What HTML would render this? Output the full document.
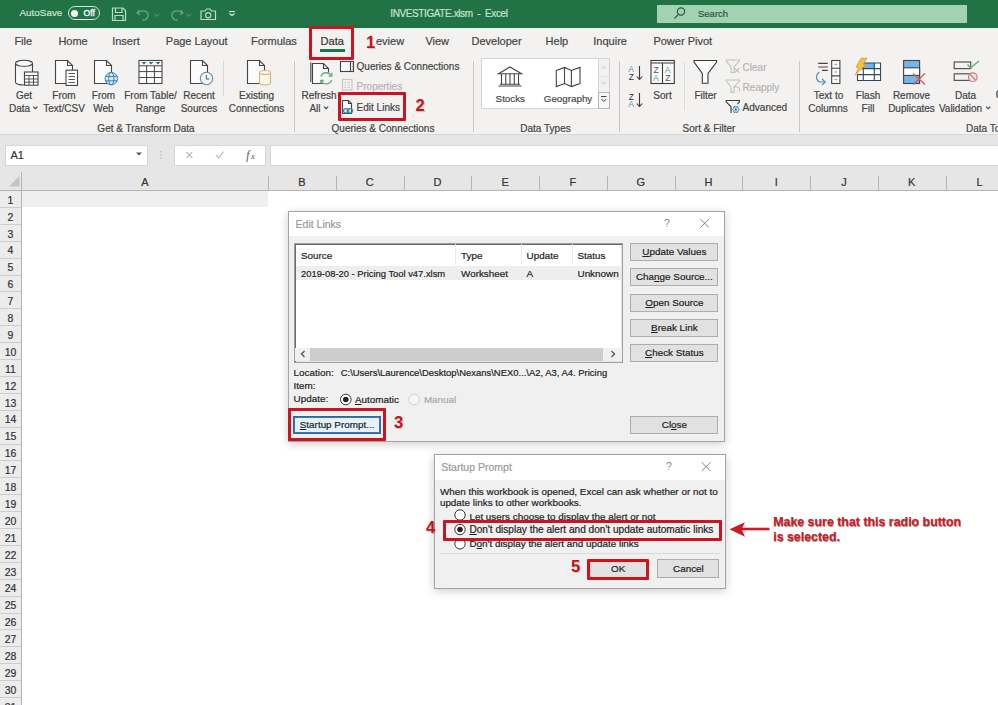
<!DOCTYPE html>
<html><head><meta charset="utf-8"><style>
*{margin:0;padding:0;box-sizing:border-box}
html,body{width:998px;height:705px;overflow:hidden;background:#fff;font-family:"Liberation Sans",sans-serif;position:relative}
.a{position:absolute}
.t{position:absolute;white-space:nowrap;line-height:1;-webkit-text-stroke:0.2px currentColor}
.ctr{transform:translateX(-50%)}
svg{position:absolute;left:0;top:0}
</style></head><body>
<div class="a" style="left:0px;top:0px;width:998px;height:28px;background:#217346"></div>
<div class="a" style="left:0px;top:28px;width:998px;height:1px;background:#e3f4e9"></div>
<div class="a" style="left:0px;top:29px;width:998px;height:106px;background:#f3f2f1"></div>
<div class="a" style="left:0px;top:134px;width:998px;height:1px;background:#d6d6d6"></div>
<div class="a" style="left:0px;top:135px;width:998px;height:55px;background:#e6e6e6"></div>
<div class="t" style="left:19.5px;top:8.3px;font-size:9.9px;color:#c9e5d3;">AutoSave</div>
<div class="a" style="left:67.5px;top:6px;width:32.5px;height:14px;border:1.4px solid #d3eadb;border-radius:7px"></div>
<div class="a" style="left:71px;top:9.5px;width:7px;height:7px;background:#f4fbf6;border-radius:50%"></div>
<div class="t" style="left:83.6px;top:9.2px;font-size:8.6px;color:#f4fbf6;-webkit-text-stroke:0.35px #f4fbf6">Off</div>
<div class="t" style="left:390.3px;top:8.5px;font-size:10px;color:#c3e3ce;letter-spacing:-0.4px">INVESTIGATE.xlsm&nbsp; - &nbsp;Excel</div>
<div class="a" style="left:656.5px;top:5px;width:310px;height:18px;background:#a2d1b3"></div>
<div class="t" style="left:698px;top:8.5px;font-size:9.5px;color:#2c5b40;">Search</div>
<div class="t" style="left:14.4px;top:36px;font-size:11px;color:#444;">File</div>
<div class="t" style="left:58.4px;top:36px;font-size:11px;color:#444;">Home</div>
<div class="t" style="left:112.2px;top:36px;font-size:11px;color:#444;">Insert</div>
<div class="t" style="left:165.8px;top:36px;font-size:11px;color:#444;">Page Layout</div>
<div class="t" style="left:251px;top:36px;font-size:11px;color:#444;">Formulas</div>
<div class="t" style="left:320.6px;top:36px;font-size:11px;color:#333;">Data</div>
<div class="t" style="left:376px;top:36px;font-size:11px;color:#444;">eview</div>
<div class="t" style="left:425.4px;top:36px;font-size:11px;color:#444;">View</div>
<div class="t" style="left:471.5px;top:36px;font-size:11px;color:#444;">Developer</div>
<div class="t" style="left:545.6px;top:36px;font-size:11px;color:#444;">Help</div>
<div class="t" style="left:593.3px;top:36px;font-size:11px;color:#444;">Inquire</div>
<div class="t" style="left:653.4px;top:36px;font-size:11px;color:#444;">Power Pivot</div>
<div class="a" style="left:320px;top:49.3px;width:25px;height:2.4px;background:#217346"></div>
<div class="a" style="left:481.3px;top:58px;width:117.7px;height:51px;background:#fff;border:1px solid #d4d4d4;border-right:none"></div>
<div class="a" style="left:598px;top:58px;width:11.5px;height:51px;background:#f1f1f1;border:1px solid #d4d4d4"></div>
<div class="a" style="left:599px;top:75.5px;width:9.5px;height:1px;background:#dedede"></div>
<div class="a" style="left:598px;top:91.5px;width:11.5px;height:17px;background:#f7f7f7;border:1px solid #b5b5b5"></div>
<div class="t ctr" style="left:24px;top:91px;font-size:10px;color:#444">Get</div>
<div class="t ctr" style="left:19.5px;top:103.5px;font-size:10px;color:#444">Data</div>
<div class="t ctr" style="left:64px;top:91px;font-size:10px;color:#444">From</div>
<div class="t ctr" style="left:64px;top:103.5px;font-size:10px;color:#444">Text/CSV</div>
<div class="t ctr" style="left:103.5px;top:91px;font-size:10px;color:#444">From</div>
<div class="t ctr" style="left:103.5px;top:103.5px;font-size:10px;color:#444">Web</div>
<div class="t ctr" style="left:150.5px;top:91px;font-size:10px;color:#444">From Table/</div>
<div class="t ctr" style="left:150.5px;top:103.5px;font-size:10px;color:#444">Range</div>
<div class="t ctr" style="left:199px;top:91px;font-size:10px;color:#444">Recent</div>
<div class="t ctr" style="left:199px;top:103.5px;font-size:10px;color:#444">Sources</div>
<div class="t ctr" style="left:256.5px;top:91px;font-size:10px;color:#444">Existing</div>
<div class="t ctr" style="left:256.5px;top:103.5px;font-size:10px;color:#444">Connections</div>
<div class="t ctr" style="left:319px;top:91px;font-size:10px;color:#444">Refresh</div>
<div class="t ctr" style="left:315px;top:103.5px;font-size:10px;color:#444">All</div>
<div class="t" style="left:356.6px;top:62px;font-size:10px;color:#444;">Queries &amp; Connections</div>
<div class="t" style="left:356.6px;top:82px;font-size:10px;color:#b4b4b4;">Properties</div>
<div class="t" style="left:356.6px;top:102.5px;font-size:10px;color:#444;">Edit Links</div>
<div class="t ctr" style="left:510.3px;top:94px;font-size:9.8px;color:#4a4a4a">Stocks</div>
<div class="t ctr" style="left:568px;top:94px;font-size:9.8px;color:#4a4a4a">Geography</div>
<div class="t ctr" style="left:662.5px;top:91px;font-size:10px;color:#444">Sort</div>
<div class="t ctr" style="left:705.5px;top:91px;font-size:10px;color:#444">Filter</div>
<div class="t" style="left:742.6px;top:63px;font-size:10px;color:#b4b4b4;">Clear</div>
<div class="t" style="left:742.6px;top:83px;font-size:10px;color:#b4b4b4;">Reapply</div>
<div class="t" style="left:742.6px;top:103px;font-size:10px;color:#444;">Advanced</div>
<div class="t ctr" style="left:828.5px;top:91px;font-size:10px;color:#444">Text to</div>
<div class="t ctr" style="left:828px;top:103.5px;font-size:10px;color:#444">Columns</div>
<div class="t ctr" style="left:868px;top:91px;font-size:10px;color:#444">Flash</div>
<div class="t ctr" style="left:868px;top:103.5px;font-size:10px;color:#444">Fill</div>
<div class="t ctr" style="left:911.5px;top:91px;font-size:10px;color:#444">Remove</div>
<div class="t ctr" style="left:911.5px;top:103.5px;font-size:10px;color:#444">Duplicates</div>
<div class="t ctr" style="left:965.5px;top:91px;font-size:10px;color:#444">Data</div>
<div class="t ctr" style="left:960.5px;top:103.5px;font-size:10px;color:#444">Validation</div>
<div class="t ctr" style="left:146px;top:123.6px;font-size:10px;color:#444">Get &amp; Transform Data</div>
<div class="t ctr" style="left:383px;top:123.6px;font-size:10px;color:#444">Queries &amp; Connections</div>
<div class="t ctr" style="left:545.5px;top:123.6px;font-size:10px;color:#444">Data Types</div>
<div class="t ctr" style="left:709px;top:123.6px;font-size:10px;color:#444">Sort &amp; Filter</div>
<div class="t" style="left:966px;top:123.6px;font-size:10px;color:#444;">Data Tools</div>
<div class="a" style="left:293.6px;top:61px;width:1px;height:71px;background:#c8c8c8"></div>
<div class="a" style="left:472.6px;top:61px;width:1px;height:71px;background:#c8c8c8"></div>
<div class="a" style="left:619px;top:61px;width:1px;height:71px;background:#c8c8c8"></div>
<div class="a" style="left:798.5px;top:61px;width:1px;height:71px;background:#c8c8c8"></div>
<div class="a" style="left:222.5px;top:61px;width:1px;height:35px;background:#d8d8d8"></div>
<div class="a" style="left:684px;top:62px;width:1px;height:48px;background:#dcdcdc"></div>
<div class="a" style="left:4.5px;top:144.5px;width:143px;height:21px;background:#fff;border:1px solid #d6d6d6"></div>
<div class="t" style="left:10.5px;top:150px;font-size:11px;color:#333;">A1</div>
<div class="a" style="left:173.5px;top:144.5px;width:92px;height:21px;background:#fff;border:1px solid #d6d6d6"></div>
<div class="a" style="left:269.5px;top:144.5px;width:730px;height:21px;background:#fff;border:1px solid #d6d6d6"></div>
<div class="a" style="left:0px;top:190px;width:998px;height:1px;background:#b4b4b4"></div>
<div class="a" style="left:21px;top:172px;width:1px;height:533px;background:#b4b4b4"></div>
<div class="a" style="left:268.1px;top:175.5px;width:1px;height:14.5px;background:#b5b5b5"></div>
<div class="a" style="left:335.85px;top:175.5px;width:1px;height:14.5px;background:#b5b5b5"></div>
<div class="a" style="left:403.6px;top:175.5px;width:1px;height:14.5px;background:#b5b5b5"></div>
<div class="a" style="left:471.35px;top:175.5px;width:1px;height:14.5px;background:#b5b5b5"></div>
<div class="a" style="left:539.1px;top:175.5px;width:1px;height:14.5px;background:#b5b5b5"></div>
<div class="a" style="left:606.85px;top:175.5px;width:1px;height:14.5px;background:#b5b5b5"></div>
<div class="a" style="left:674.6px;top:175.5px;width:1px;height:14.5px;background:#b5b5b5"></div>
<div class="a" style="left:742.35px;top:175.5px;width:1px;height:14.5px;background:#b5b5b5"></div>
<div class="a" style="left:810.1px;top:175.5px;width:1px;height:14.5px;background:#b5b5b5"></div>
<div class="a" style="left:877.85px;top:175.5px;width:1px;height:14.5px;background:#b5b5b5"></div>
<div class="a" style="left:945.6px;top:175.5px;width:1px;height:14.5px;background:#b5b5b5"></div>
<div class="a" style="left:1013.35px;top:175.5px;width:1px;height:14.5px;background:#b5b5b5"></div>
<div class="t" style="left:145px;top:177px;font-size:11px;color:#333;transform:translateX(-50%)">A</div>
<div class="t ctr" style="left:301.975px;top:177px;font-size:11px;color:#333">B</div>
<div class="t ctr" style="left:369.725px;top:177px;font-size:11px;color:#333">C</div>
<div class="t ctr" style="left:437.475px;top:177px;font-size:11px;color:#333">D</div>
<div class="t ctr" style="left:505.225px;top:177px;font-size:11px;color:#333">E</div>
<div class="t ctr" style="left:572.975px;top:177px;font-size:11px;color:#333">F</div>
<div class="t ctr" style="left:640.725px;top:177px;font-size:11px;color:#333">G</div>
<div class="t ctr" style="left:708.475px;top:177px;font-size:11px;color:#333">H</div>
<div class="t ctr" style="left:776.225px;top:177px;font-size:11px;color:#333">I</div>
<div class="t ctr" style="left:843.975px;top:177px;font-size:11px;color:#333">J</div>
<div class="t ctr" style="left:911.725px;top:177px;font-size:11px;color:#333">K</div>
<div class="t ctr" style="left:979.475px;top:177px;font-size:11px;color:#333">L</div>
<div class="a" style="left:0px;top:190.5px;width:21px;height:515px;background:#ececec"></div>
<div class="a" style="left:22px;top:191px;width:246px;height:16.3px;background:#efefef"></div>
<div class="a" style="left:0px;top:206.9px;width:21px;height:1px;background:#cdcdcd"></div>
<div class="t" style="left:0;width:21px;text-align:center;top:194.7px;font-size:10.5px;color:#333">1</div>
<div class="a" style="left:0px;top:223.8px;width:21px;height:1px;background:#cdcdcd"></div>
<div class="t" style="left:0;width:21px;text-align:center;top:211.6px;font-size:10.5px;color:#333">2</div>
<div class="a" style="left:0px;top:240.70000000000002px;width:21px;height:1px;background:#cdcdcd"></div>
<div class="t" style="left:0;width:21px;text-align:center;top:228.5px;font-size:10.5px;color:#333">3</div>
<div class="a" style="left:0px;top:257.59999999999997px;width:21px;height:1px;background:#cdcdcd"></div>
<div class="t" style="left:0;width:21px;text-align:center;top:245.4px;font-size:10.5px;color:#333">4</div>
<div class="a" style="left:0px;top:274.5px;width:21px;height:1px;background:#cdcdcd"></div>
<div class="t" style="left:0;width:21px;text-align:center;top:262.3px;font-size:10.5px;color:#333">5</div>
<div class="a" style="left:0px;top:291.4px;width:21px;height:1px;background:#cdcdcd"></div>
<div class="t" style="left:0;width:21px;text-align:center;top:279.2px;font-size:10.5px;color:#333">6</div>
<div class="a" style="left:0px;top:308.29999999999995px;width:21px;height:1px;background:#cdcdcd"></div>
<div class="t" style="left:0;width:21px;text-align:center;top:296.1px;font-size:10.5px;color:#333">7</div>
<div class="a" style="left:0px;top:325.19999999999993px;width:21px;height:1px;background:#cdcdcd"></div>
<div class="t" style="left:0;width:21px;text-align:center;top:313.0px;font-size:10.5px;color:#333">8</div>
<div class="a" style="left:0px;top:342.09999999999997px;width:21px;height:1px;background:#cdcdcd"></div>
<div class="t" style="left:0;width:21px;text-align:center;top:329.9px;font-size:10.5px;color:#333">9</div>
<div class="a" style="left:0px;top:359.0px;width:21px;height:1px;background:#cdcdcd"></div>
<div class="t" style="left:0;width:21px;text-align:center;top:346.8px;font-size:10.5px;color:#333">10</div>
<div class="a" style="left:0px;top:375.9px;width:21px;height:1px;background:#cdcdcd"></div>
<div class="t" style="left:0;width:21px;text-align:center;top:363.7px;font-size:10.5px;color:#333">11</div>
<div class="a" style="left:0px;top:392.79999999999995px;width:21px;height:1px;background:#cdcdcd"></div>
<div class="t" style="left:0;width:21px;text-align:center;top:380.6px;font-size:10.5px;color:#333">12</div>
<div class="a" style="left:0px;top:409.69999999999993px;width:21px;height:1px;background:#cdcdcd"></div>
<div class="t" style="left:0;width:21px;text-align:center;top:397.5px;font-size:10.5px;color:#333">13</div>
<div class="a" style="left:0px;top:426.59999999999997px;width:21px;height:1px;background:#cdcdcd"></div>
<div class="t" style="left:0;width:21px;text-align:center;top:414.4px;font-size:10.5px;color:#333">14</div>
<div class="a" style="left:0px;top:443.49999999999994px;width:21px;height:1px;background:#cdcdcd"></div>
<div class="t" style="left:0;width:21px;text-align:center;top:431.3px;font-size:10.5px;color:#333">15</div>
<div class="a" style="left:0px;top:460.4px;width:21px;height:1px;background:#cdcdcd"></div>
<div class="t" style="left:0;width:21px;text-align:center;top:448.2px;font-size:10.5px;color:#333">16</div>
<div class="a" style="left:0px;top:477.29999999999995px;width:21px;height:1px;background:#cdcdcd"></div>
<div class="t" style="left:0;width:21px;text-align:center;top:465.1px;font-size:10.5px;color:#333">17</div>
<div class="a" style="left:0px;top:494.19999999999993px;width:21px;height:1px;background:#cdcdcd"></div>
<div class="t" style="left:0;width:21px;text-align:center;top:482.0px;font-size:10.5px;color:#333">18</div>
<div class="a" style="left:0px;top:511.09999999999997px;width:21px;height:1px;background:#cdcdcd"></div>
<div class="t" style="left:0;width:21px;text-align:center;top:498.9px;font-size:10.5px;color:#333">19</div>
<div class="a" style="left:0px;top:528.0px;width:21px;height:1px;background:#cdcdcd"></div>
<div class="t" style="left:0;width:21px;text-align:center;top:515.8px;font-size:10.5px;color:#333">20</div>
<div class="a" style="left:0px;top:544.9px;width:21px;height:1px;background:#cdcdcd"></div>
<div class="t" style="left:0;width:21px;text-align:center;top:532.7px;font-size:10.5px;color:#333">21</div>
<div class="a" style="left:0px;top:561.8px;width:21px;height:1px;background:#cdcdcd"></div>
<div class="t" style="left:0;width:21px;text-align:center;top:549.6px;font-size:10.5px;color:#333">22</div>
<div class="a" style="left:0px;top:578.6999999999999px;width:21px;height:1px;background:#cdcdcd"></div>
<div class="t" style="left:0;width:21px;text-align:center;top:566.5px;font-size:10.5px;color:#333">23</div>
<div class="a" style="left:0px;top:595.6px;width:21px;height:1px;background:#cdcdcd"></div>
<div class="t" style="left:0;width:21px;text-align:center;top:583.4px;font-size:10.5px;color:#333">24</div>
<div class="a" style="left:0px;top:612.4999999999999px;width:21px;height:1px;background:#cdcdcd"></div>
<div class="t" style="left:0;width:21px;text-align:center;top:600.3px;font-size:10.5px;color:#333">25</div>
<div class="a" style="left:0px;top:629.4px;width:21px;height:1px;background:#cdcdcd"></div>
<div class="t" style="left:0;width:21px;text-align:center;top:617.2px;font-size:10.5px;color:#333">26</div>
<div class="a" style="left:0px;top:646.3px;width:21px;height:1px;background:#cdcdcd"></div>
<div class="t" style="left:0;width:21px;text-align:center;top:634.1px;font-size:10.5px;color:#333">27</div>
<div class="a" style="left:0px;top:663.1999999999999px;width:21px;height:1px;background:#cdcdcd"></div>
<div class="t" style="left:0;width:21px;text-align:center;top:651.0px;font-size:10.5px;color:#333">28</div>
<div class="a" style="left:0px;top:680.0999999999999px;width:21px;height:1px;background:#cdcdcd"></div>
<div class="t" style="left:0;width:21px;text-align:center;top:667.9px;font-size:10.5px;color:#333">29</div>
<div class="a" style="left:0px;top:696.9999999999999px;width:21px;height:1px;background:#cdcdcd"></div>
<div class="t" style="left:0;width:21px;text-align:center;top:684.8px;font-size:10.5px;color:#333">30</div>
<div class="a" style="left:0px;top:713.9px;width:21px;height:1px;background:#cdcdcd"></div>
<div class="t" style="left:0;width:21px;text-align:center;top:701.7px;font-size:10.5px;color:#333">31</div>
<svg width="998" height="705" viewBox="0 0 998 705" style="position:absolute;left:0;top:0">
<g fill="none" stroke="#b9dcc6" stroke-width="1.2">
 <!-- save -->
 <path d="M112.5,8 H123 L125.5,10.5 V20.5 H112.5 Z"/>
 <path d="M115.5,8 V12.5 H122 V8"/>
 <path d="M115,20.5 V15.5 H123 V20.5"/>
 <!-- camera -->
 <path d="M201,11 H205 L206.5,9 H210 L211.5,11 H215.5 V19.5 H201 Z"/>
 <circle cx="208.2" cy="15.2" r="2.6"/>
 <!-- customize -->
 <path d="M229,11.5 H235 M229.5,13.5 L232,15.5 L234.5,13.5" stroke="#d7ecdf"/>
</g>
<g fill="none" stroke="#6aa383" stroke-width="1.2">
 <path d="M139,10 L137,13 L140,14.5 M137.3,13 C141,10 147,10 148,14 C149,18 145,20.5 142,20"/>
 <path d="M154.5,14.2 L156.8,16.3 L159.1,14.2" stroke-width="1"/>
 <path d="M181,10 L183,13 L180,14.5 M182.7,13 C179,10 173,10 172,14 C171,18 175,20.5 178,20"/>
 <path d="M186.5,14.2 L188.8,16.3 L191.1,14.2" stroke-width="1"/>
</g>
<!-- search icon -->
<g fill="none" stroke="#2c5b40" stroke-width="1.2">
 <circle cx="681" cy="11.5" r="3.6"/><path d="M678.5,14.2 L674.5,18.5"/>
</g>

<!-- ribbon icons -->
<g fill="#fbfbfb" stroke="#454545" stroke-width="1.1">
 <!-- Get Data -->
 <path d="M15.5,63.5 V82 C15.5,85 24,85.2 24.5,84.5"/>
 <path d="M32.5,63.5 V72"/>
 <ellipse cx="24" cy="63.3" rx="8.5" ry="3"/>
 <rect x="24.5" y="72" width="13.5" height="13.2" fill="#fff"/>
 <path d="M24.5,75.5 H38 M24.5,79 H38 M24.5,82.2 H38 M29,75.5 V85 M33.5,75.5 V85" stroke-width="0.9"/>
 <!-- From Text/CSV -->
 <path d="M55.5,60.5 H67.5 L72.5,65.5 V83.5 H55.5 Z"/>
 <path d="M67.5,60.5 V65.5 H72.5" fill="none"/>
 <rect x="66" y="70.2" width="11.5" height="15.2" fill="#fff"/>
 <path d="M68.5,73.5 H75 M68.5,76.5 H75 M68.5,79.5 H75 M68.5,82.5 H75" stroke-width="0.9"/>
 <!-- From Web -->
 <path d="M94.5,60.5 H106.5 L111.5,65.5 V83.5 H94.5 Z"/>
 <path d="M106.5,60.5 V65.5 H111.5" fill="none"/>
 <!-- From Table/Range -->
 <rect x="139" y="60.5" width="23" height="23" fill="#fff"/>
 <path d="M139,65.8 H162 M139,71.6 H162 M139,77.5 H162 M146.6,65.8 V83.5 M154.4,65.8 V83.5" stroke-width="1"/>
 <!-- Recent Sources -->
 <path d="M190.5,60.5 H202.5 L207.5,65.5 V83.5 H190.5 Z"/>
 <path d="M202.5,60.5 V65.5 H207.5" fill="none"/>
 <!-- Existing Connections -->
 <path d="M247.5,60.5 H259.5 L264.5,65.5 V83.5 H247.5 Z"/>
 <path d="M259.5,60.5 V65.5 H264.5" fill="none"/>
 <!-- Refresh All -->
 <path d="M310.8,62.5 V82" fill="none"/>
 <path d="M312.5,63.5 H323.5 L328.5,68.5 V83.5 H312.5 Z"/>
 <path d="M323.5,63.5 V68.5 H328.5" fill="none"/>
 <!-- Queries & Connections -->
 <rect x="340.5" y="61.5" width="13" height="10" fill="#f7fbfd"/>
 <path d="M350.5,61.5 V71.5" fill="none"/>
 <!-- Edit Links -->
 <path d="M342.5,100.5 H348.5 L351.5,103.5 V113.5 H342.5 Z"/>
 <path d="M348.5,100.5 V103.5 H351.5" fill="none"/>
</g>
<!-- dots in Q&C -->
<g fill="#666"><rect x="351.9" y="63.5" width="0.9" height="0.9"/><rect x="351.9" y="66.1" width="0.9" height="0.9"/><rect x="351.9" y="68.7" width="0.9" height="0.9"/></g>
<!-- properties (disabled) -->
<g fill="none" stroke="#c4c4c4" stroke-width="1.1">
 <rect x="342.5" y="79.5" width="9.5" height="10.5"/>
 <path d="M344.5,82.5 H346 M347.5,82.5 H350 M344.5,85 H346 M347.5,85 H350 M344.5,87.5 H346 M347.5,87.5 H350"/>
</g>
<!-- table header triangles -->
<g fill="#2f6f86"><path d="M141.5,62 L146.5,62 L144,64.6 Z M148.5,62 L153.5,62 L151,64.6 Z M155.5,62 L160.5,62 L158,64.6 Z"/></g>
<!-- globe -->
<g stroke="#3b84aa" stroke-width="1" fill="#d3ecf7">
 <circle cx="111.3" cy="78.6" r="6.2"/>
 <ellipse cx="111.3" cy="78.6" rx="2.6" ry="6.2" fill="none"/>
 <path d="M105.3,76.4 H117.3 M105.3,80.8 H117.3" fill="none"/>
</g>
<!-- clock -->
<g stroke="#5d8ea2" stroke-width="1.1" fill="#eef6f9">
 <circle cx="206.5" cy="78.5" r="6.2"/>
 <path d="M206.3,75 V79 H209.3" fill="none" stroke="#444" stroke-width="0.9"/>
</g>
<!-- yellow cylinder -->
<g stroke="#d3b584" stroke-width="1.1" fill="#fdf5e6">
 <path d="M259.5,72.5 V83 C259.5,85.5 270.5,85.5 270.5,83 V72.5"/>
 <ellipse cx="265" cy="72.5" rx="5.5" ry="2"/>
</g>
<!-- refresh arrows -->
<circle cx="326.3" cy="78.3" r="6.3" fill="#f3f8f4"/>
<g stroke="#67a97c" stroke-width="1.3" fill="none">
 <path d="M320.8,76.5 A5.7,5.7 0 0 1 331.2,75.8"/>
 <path d="M331.7,80 A5.7,5.7 0 0 1 321.3,80.8"/>
 <path d="M331.8,72.8 V76.2 H328.5"/>
 <path d="M320.8,83.5 V80.3 H324"/>
</g>
<!-- edit links chain -->
<g stroke="#3a8eaa" stroke-width="1.2" fill="#e3f3f8">
 <ellipse cx="346.2" cy="110.8" rx="2.7" ry="2.1"/>
 <ellipse cx="349.9" cy="110.8" rx="2.7" ry="2.1" fill="none"/>
</g>

<!-- Stocks -->
<g fill="none" stroke="#454545" stroke-width="1.1">
 <path d="M498.5,73.7 L510,67 L521.5,73.7 Z"/>
 <path d="M498.5,86 H521.5 M500,84.2 H520"/>
 <path d="M501.5,74 V84.2 M505.8,74 V84.2 M510,74 V84.2 M514.3,74 V84.2 M518.5,74 V84.2"/>
 <!-- Geography -->
 <path d="M556.3,70.5 L564.5,67.4 L571.4,70.5 L580,67.4 V83.5 L571.4,86.6 L564.5,83.5 L556.3,86.6 Z"/>
 <path d="M564.5,67.4 V83.5 M571.4,70.5 V86.6"/>
</g>
<!-- gallery scroll glyphs -->
<g fill="none" stroke="#b8b8b8" stroke-width="0.9">
 <path d="M601.5,68.5 L603.7,66.5 L605.9,68.5"/>
 <path d="M601.5,82 L603.7,84 L605.9,82"/>
</g>
<g fill="none" stroke="#444" stroke-width="1">
 <path d="M601,96.5 H606.5 M601.3,99 L603.8,101.5 L606.3,99"/>
</g>

<!-- sort AZ -->
<g font-family="Liberation Sans" font-size="8.4">
 <text x="628.3" y="71.8" fill="#4a9ab8">A</text>
 <text x="628.8" y="79.8" fill="#333">Z</text>
 <text x="628.8" y="99.5" fill="#333">Z</text>
 <text x="628.3" y="107" fill="#4a9ab8">A</text>
</g>
<g fill="none" stroke="#3a3a3a" stroke-width="1.1">
 <path d="M639.5,66 V79.5 M636.8,76.5 L639.5,79.5 L642.2,76.5"/>
 <path d="M639.5,93 V106.5 M636.8,103.5 L639.5,106.5 L642.2,103.5"/>
 <!-- sort box -->
 <rect x="651" y="60.5" width="23.3" height="23" fill="#fafafa"/>
 <path d="M651,63 H674.3 M662.5,63 V83.5"/>
 <!-- filter -->
 <path d="M694,60.5 H716.6 V62 L708,73.5 V83.3 H702.3 V73.5 L694,62 Z" fill="#fbfbfb"/>
</g>
<g font-family="Liberation Sans" font-size="8.6">
 <text x="653.5" y="72.5" fill="#555">Z</text>
 <text x="653" y="80.5" fill="#4a9ab8">A</text>
 <text x="664.8" y="72.5" fill="#4a9ab8">A</text>
 <text x="665.3" y="80.5" fill="#555">Z</text>
</g>
<!-- Clear / Reapply / Advanced funnels -->
<g fill="none" stroke="#c2c2c2" stroke-width="1.1">
 <path d="M726.2,60 H739.4 V61 L734,67 V72.5 H731 V67 L726.2,61 Z"/>
 <path d="M734.5,68 L739.5,72.8 M739.5,68 L734.5,72.8"/>
 <path d="M726.2,80 H739.4 V81 L734,87 V92.4 H731 V87 L726.2,81 Z"/>
 <path d="M734,88 A3,3 0 1 1 739,91.5"/>
</g>
<g fill="none" stroke="#3a3a3a" stroke-width="1.1">
 <path d="M737.5,104.2 L739.4,101.8 V100.5 H726.2 V101.8 L731,106.8 V113"/>
</g>
<polygon points="739.40,109.50 738.05,110.80 737.60,112.62 735.80,112.10 734.00,112.62 733.55,110.80 732.20,109.50 733.55,108.20 734.00,106.38 735.80,106.90 737.60,106.38 738.05,108.20" fill="#bfe3f3" stroke="#2c7fa8" stroke-width="0.9" stroke-linejoin="round"/>
<circle cx="735.8" cy="109.5" r="1" fill="#1f5f80"/>
<!-- Text to Columns -->
<g fill="none" stroke="#454545" stroke-width="1.1">
 <path d="M818.2,63.4 H827.8 M818.2,67 H827.8 M822,70.4 H827.8"/>
 <rect x="831.7" y="60.5" width="8.2" height="23" fill="#fff"/>
 <path d="M831.7,68.2 H839.9 M831.7,75.9 H839.9"/>
 <path d="M834.3,64.3 H837.3 M834.3,72 H837.3 M834.3,79.7 H837.3" stroke-width="0.8" stroke="#777"/>
</g>
<g fill="none" stroke="#5390ad" stroke-width="1.2">
 <path d="M819.5,72 C815.5,74.5 815.5,80.5 820,82 H825"/>
 <path d="M822,79 L825.3,82 L822,85"/>
</g>
<!-- Flash Fill -->
<rect x="863.5" y="63" width="17" height="17.5" fill="#fff"/>
<rect x="857.5" y="69" width="6" height="11.5" fill="#fff"/>
<rect x="863.5" y="63" width="10.8" height="5.6" fill="#6fb3e8"/>
<g fill="none" stroke="#2f4a5c" stroke-width="1.1">
 <path d="M863.5,63 H880.5 V80.5 H857.5 V74.5"/>
 <path d="M860,68.6 H880.5 M857.5,74.6 H880.5 M863.3,63 V80.5 M874.3,63 V80.5"/>
</g>
<path d="M861,58.3 H866.8 L863.3,64.3 H866.2 L855.3,75.3 L858.8,67.2 H856 Z" fill="#f5c04a" stroke="#d9962a" stroke-width="0.8" stroke-linejoin="round"/>
<!-- Remove Duplicates -->
<g stroke="#444" stroke-width="1.1">
 <rect x="903.6" y="60.5" width="16" height="23" fill="#75b5e8"/>
 <rect x="903.6" y="67.8" width="16" height="7.6" fill="#fff"/>
</g>
<path d="M913.2,73.5 L925,84.5 M925,73.5 L913.2,84.5" stroke="#d9534f" stroke-width="1.2" fill="none"/>
<!-- Data Validation -->
<g fill="none" stroke="#555" stroke-width="1.2">
 <rect x="954.2" y="62" width="16.5" height="6.6"/>
 <rect x="954.2" y="73.8" width="16.5" height="6.6"/>
</g>
<path d="M967.5,64.5 L970.5,67.8 L979,61" stroke="#62ad76" stroke-width="1.3" fill="none"/>
<g stroke="#d07a86" stroke-width="1.2" fill="#f6e3e6">
 <circle cx="972.8" cy="77.2" r="4.3"/>
 <path d="M970,74.4 L975.6,80" fill="none"/>
</g>
<path d="M998,90.8 C996.6,91.5 996.3,96.8 998,97.5" fill="none" stroke="#444" stroke-width="1.4"/>

<!-- dropdown chevrons under labels -->
<g fill="none" stroke="#444" stroke-width="1.2">
 <path d="M33.3,106.6 L35.4,108.7 L37.5,106.6"/>
 <path d="M324,106.6 L326.1,108.7 L328.2,106.6"/>
 <path d="M986.2,106.6 L988.3,108.7 L990.4,106.6"/>
</g>
<!-- formula bar glyphs -->
<path d="M136,152.5 L142,152.5 L139,155.5 Z" fill="#555"/>
<g fill="#aaa"><rect x="160.3" y="151" width="1.2" height="1.2"/><rect x="160.3" y="154.3" width="1.2" height="1.2"/><rect x="160.3" y="157.6" width="1.2" height="1.2"/></g>
<g fill="none" stroke="#b9b9b9" stroke-width="1.1">
 <path d="M186.5,152 L192.3,157.8 M192.3,152 L186.5,157.8"/>
 <path d="M216,155 L218.8,157.8 L223.5,151.5"/>
</g>
<text x="246.3" y="158.5" font-family="Liberation Serif" font-style="italic" font-size="11.5" fill="#555">f</text>
<text x="251" y="159.3" font-family="Liberation Serif" font-style="italic" font-size="8.5" fill="#555">x</text>
<!-- select-all triangle -->
<path d="M9,186.5 L19.5,186.5 L19.5,176 Z" fill="#c3c3c3"/>
</svg>
<style>
.dlg{position:absolute;background:#f0f0f0;border:1px solid #a3a3a3;box-shadow:0 2px 9px rgba(0,0,0,.2)}
.ttl{position:absolute;left:0;top:0;right:0;background:#fff}
.btn{position:absolute;background:#e1e1e1;border:1px solid #adadad;font-size:9.9px;color:#1e1e1e;text-align:center;white-space:nowrap;-webkit-text-stroke:0.2px currentColor}
.red{position:absolute;border:3.7px solid #cc1420;border-radius:1px}
.num{position:absolute;font-weight:bold;color:#c0131c;font-size:16.5px;line-height:1;text-shadow:1px 1px 1px rgba(0,0,0,.2)}
.dt{position:absolute;white-space:nowrap;line-height:1;font-size:9.9px;color:#1e1e1e;-webkit-text-stroke:0.2px currentColor}
.u{text-decoration:underline;text-underline-offset:1px}
</style>
<!-- Edit Links dialog -->
<div class="dlg" style="left:287.5px;top:210.5px;width:437px;height:231px">
 <div class="ttl" style="height:24.5px"></div>
</div>
<div class="dt" style="left:295.6px;top:219px;font-size:10.5px;color:#9a9a9a">Edit Links</div>
<div class="dt" style="left:664px;top:217.5px;font-size:10.5px;color:#8a8a8a;-webkit-text-stroke:0">?</div>
<svg style="position:absolute;left:0;top:0" width="998" height="705">
 <path d="M700.3,219 L709,227.6 M709,219 L700.3,227.6" stroke="#777" stroke-width="0.9"/>
 <path d="M701.8,462.3 L710.5,470.9 M710.5,462.3 L701.8,470.9" stroke="#777" stroke-width="0.9"/>
</svg>
<!-- list box -->
<div style="position:absolute;left:293.5px;top:242.5px;width:329.5px;height:120.5px;background:#fff;border:1px solid #a0a0a0;box-shadow:inset 1px 1px 0 #696969, inset -1px -1px 0 #e3e3e3"></div>
<div style="position:absolute;left:455px;top:244px;width:1px;height:21px;background:#ececec"></div>
<div style="position:absolute;left:520.8px;top:244px;width:1px;height:21px;background:#ececec"></div>
<div style="position:absolute;left:571.6px;top:244px;width:1px;height:21px;background:#ececec"></div>
<div class="dt" style="left:301px;top:250.5px">Source</div>
<div class="dt" style="left:461px;top:250.5px">Type</div>
<div class="dt" style="left:526.6px;top:250.5px">Update</div>
<div class="dt" style="left:577.5px;top:250.5px">Status</div>
<div style="position:absolute;left:296px;top:265.7px;width:325px;height:14px;background:#eeeeee"></div>
<div class="dt" style="left:301px;top:268.5px;font-size:9.4px">2019-08-20 - Pricing Tool v47.xlsm</div>
<div class="dt" style="left:461px;top:268.5px">Worksheet</div>
<div class="dt" style="left:526.6px;top:268.5px">A</div>
<div style="position:absolute;left:577.5px;top:265px;width:43px;height:16px;overflow:hidden"><div class="dt" style="left:0;top:3.5px">Unknown</div></div>
<!-- scrollbar -->
<div style="position:absolute;left:295px;top:347.5px;width:326.5px;height:13px;background:#f0f0f0"></div>
<div style="position:absolute;left:310px;top:347.5px;width:292.5px;height:13px;background:#cdcdcd"></div>
<svg style="position:absolute;left:0;top:0" width="998" height="705">
 <path d="M304.5,351 L301.5,354 L304.5,357" fill="none" stroke="#555" stroke-width="1.3"/>
 <path d="M611.5,351 L614.5,354 L611.5,357" fill="none" stroke="#555" stroke-width="1.3"/>
</svg>
<!-- buttons -->
<div class="btn" style="left:630.4px;top:243px;width:88px;height:18px;line-height:16px"><span class="u">U</span>pdate Values</div>
<div class="btn" style="left:630.4px;top:268.3px;width:88px;height:18px;line-height:16px">Cha<span class="u">n</span>ge Source...</div>
<div class="btn" style="left:630.4px;top:293.7px;width:88px;height:18px;line-height:16px"><span class="u">O</span>pen Source</div>
<div class="btn" style="left:630.4px;top:319px;width:88px;height:18px;line-height:16px"><span class="u">B</span>reak Link</div>
<div class="btn" style="left:630.4px;top:344.3px;width:88px;height:18px;line-height:16px"><span class="u">C</span>heck Status</div>
<div class="btn" style="left:630.4px;top:416.4px;width:88px;height:18px;line-height:16px">Cl<span class="u">o</span>se</div>
<!-- location -->
<div class="dt" style="left:293.6px;top:367.5px">Location:</div>
<div class="dt" style="left:340.7px;top:367.8px;font-size:9.45px">C:\Users\Laurence\Desktop\Nexans\NEX0...\A2, A3, A4. Pricing</div>
<div class="dt" style="left:293.6px;top:380.5px">Item:</div>
<div class="dt" style="left:293.6px;top:394px">Update:</div>
<svg style="position:absolute;left:0;top:0" width="998" height="705">
 <circle cx="345.8" cy="399.5" r="5.3" fill="#fff" stroke="#333" stroke-width="1"/>
 <circle cx="345.8" cy="399.5" r="2.8" fill="#222"/>
 <circle cx="414.1" cy="399.5" r="5.3" fill="#f6f6f6" stroke="#cfcfcf" stroke-width="1"/>
</svg>
<div class="dt" style="left:355px;top:394.5px"><span class="u">A</span>utomatic</div>
<div class="dt" style="left:423.9px;top:394.5px;color:#a9a9a9">Manual</div>
<!-- startup prompt button -->
<div class="btn" style="left:293px;top:415.8px;width:88.2px;height:18.4px;line-height:16px;border:1px solid #2f679c;box-shadow:inset 0 0 0 1px #3a78b5;background:#e5f1fb"><span class="u">S</span>tartup Prompt...</div>
<div class="red" style="left:288px;top:408.2px;width:97.8px;height:33px"></div>
<div class="num" style="left:394px;top:414.3px">3</div>

<!-- Startup Prompt dialog -->
<div class="dlg" style="left:433.7px;top:453.5px;width:292.6px;height:135.5px">
 <div class="ttl" style="height:25px"></div>
</div>
<svg style="position:absolute;left:0;top:0" width="998" height="705">
 <path d="M701.8,462.3 L710.5,470.9 M710.5,462.3 L701.8,470.9" stroke="#777" stroke-width="0.9"/>
</svg>
<div class="dt" style="left:441.2px;top:461.5px;font-size:10.5px;color:#9a9a9a">Startup Prompt</div>
<div class="dt" style="left:666px;top:460.5px;font-size:10.5px;color:#8a8a8a;-webkit-text-stroke:0">?</div>
<div class="dt" style="left:439.9px;top:487px">When this workbook is opened, Excel can ask whether or not to</div>
<div class="dt" style="left:439.9px;top:497.8px">update links to other workbooks.</div>
<div class="dt" style="left:469.4px;top:511.5px"><span class="u">L</span>et users choose to display the alert or not</div>
<div class="dt" style="left:469.4px;top:524.8px;font-size:10.1px"><span class="u">D</span>on't display the alert and don't update automatic links</div>
<div class="dt" style="left:469.4px;top:539px">D<span class="u">o</span>n't display the alert and update links</div>
<svg style="position:absolute;left:0;top:0" width="998" height="705">
 <circle cx="460" cy="515" r="5.2" fill="#fff" stroke="#333" stroke-width="1"/>
 <circle cx="460" cy="529.5" r="5.2" fill="#fff" stroke="#333" stroke-width="1"/>
 <circle cx="460" cy="529.5" r="2.8" fill="#222"/>
 <circle cx="460" cy="543.8" r="5.2" fill="#fff" stroke="#333" stroke-width="1"/>
</svg>
<div style="position:absolute;left:440px;top:553px;width:280px;height:1px;background:#dadada"></div>
<div class="btn" style="left:589.5px;top:561.5px;width:57.5px;height:16.5px;line-height:12.5px;border-color:#d4d4d4">OK</div>
<div class="btn" style="left:657.4px;top:559.3px;width:62px;height:18.7px;line-height:17px">Cancel</div>
<div class="red" style="left:443px;top:519.6px;width:278.7px;height:21.7px"></div>
<div class="red" style="left:587.2px;top:559.3px;width:62px;height:20.8px"></div>
<div class="num" style="left:426px;top:519px">4</div>
<div class="num" style="left:571px;top:558px">5</div>

<!-- annotation -->
<svg style="position:absolute;left:0;top:0" width="998" height="705">
 <path d="M769.5,529 H741" stroke="#cc1a22" stroke-width="2.6"/>
 <path d="M729.5,529.2 L745,522.3 L741.5,529.2 L745,536.8 Z" fill="#cc1a22"/>
</svg>
<div class="dt" style="left:773.2px;top:515.8px;font-size:12.4px;font-weight:bold;color:#c42127;text-shadow:0.5px 1px 0.6px rgba(90,0,0,.45)">Make sure that this radio button</div>
<div class="dt" style="left:773.2px;top:530.5px;font-size:12.4px;font-weight:bold;color:#c42127;text-shadow:0.5px 1px 0.6px rgba(90,0,0,.45)">is selected.</div>

<!-- ribbon annotations -->
<div class="red" style="left:308.9px;top:25.9px;width:45.6px;height:33.8px"></div>
<div class="num" style="left:366px;top:33.5px">1</div>
<div class="red" style="left:337.8px;top:92.3px;width:68.5px;height:29px"></div>
<div class="num" style="left:415.5px;top:96.5px">2</div>

</body></html>
